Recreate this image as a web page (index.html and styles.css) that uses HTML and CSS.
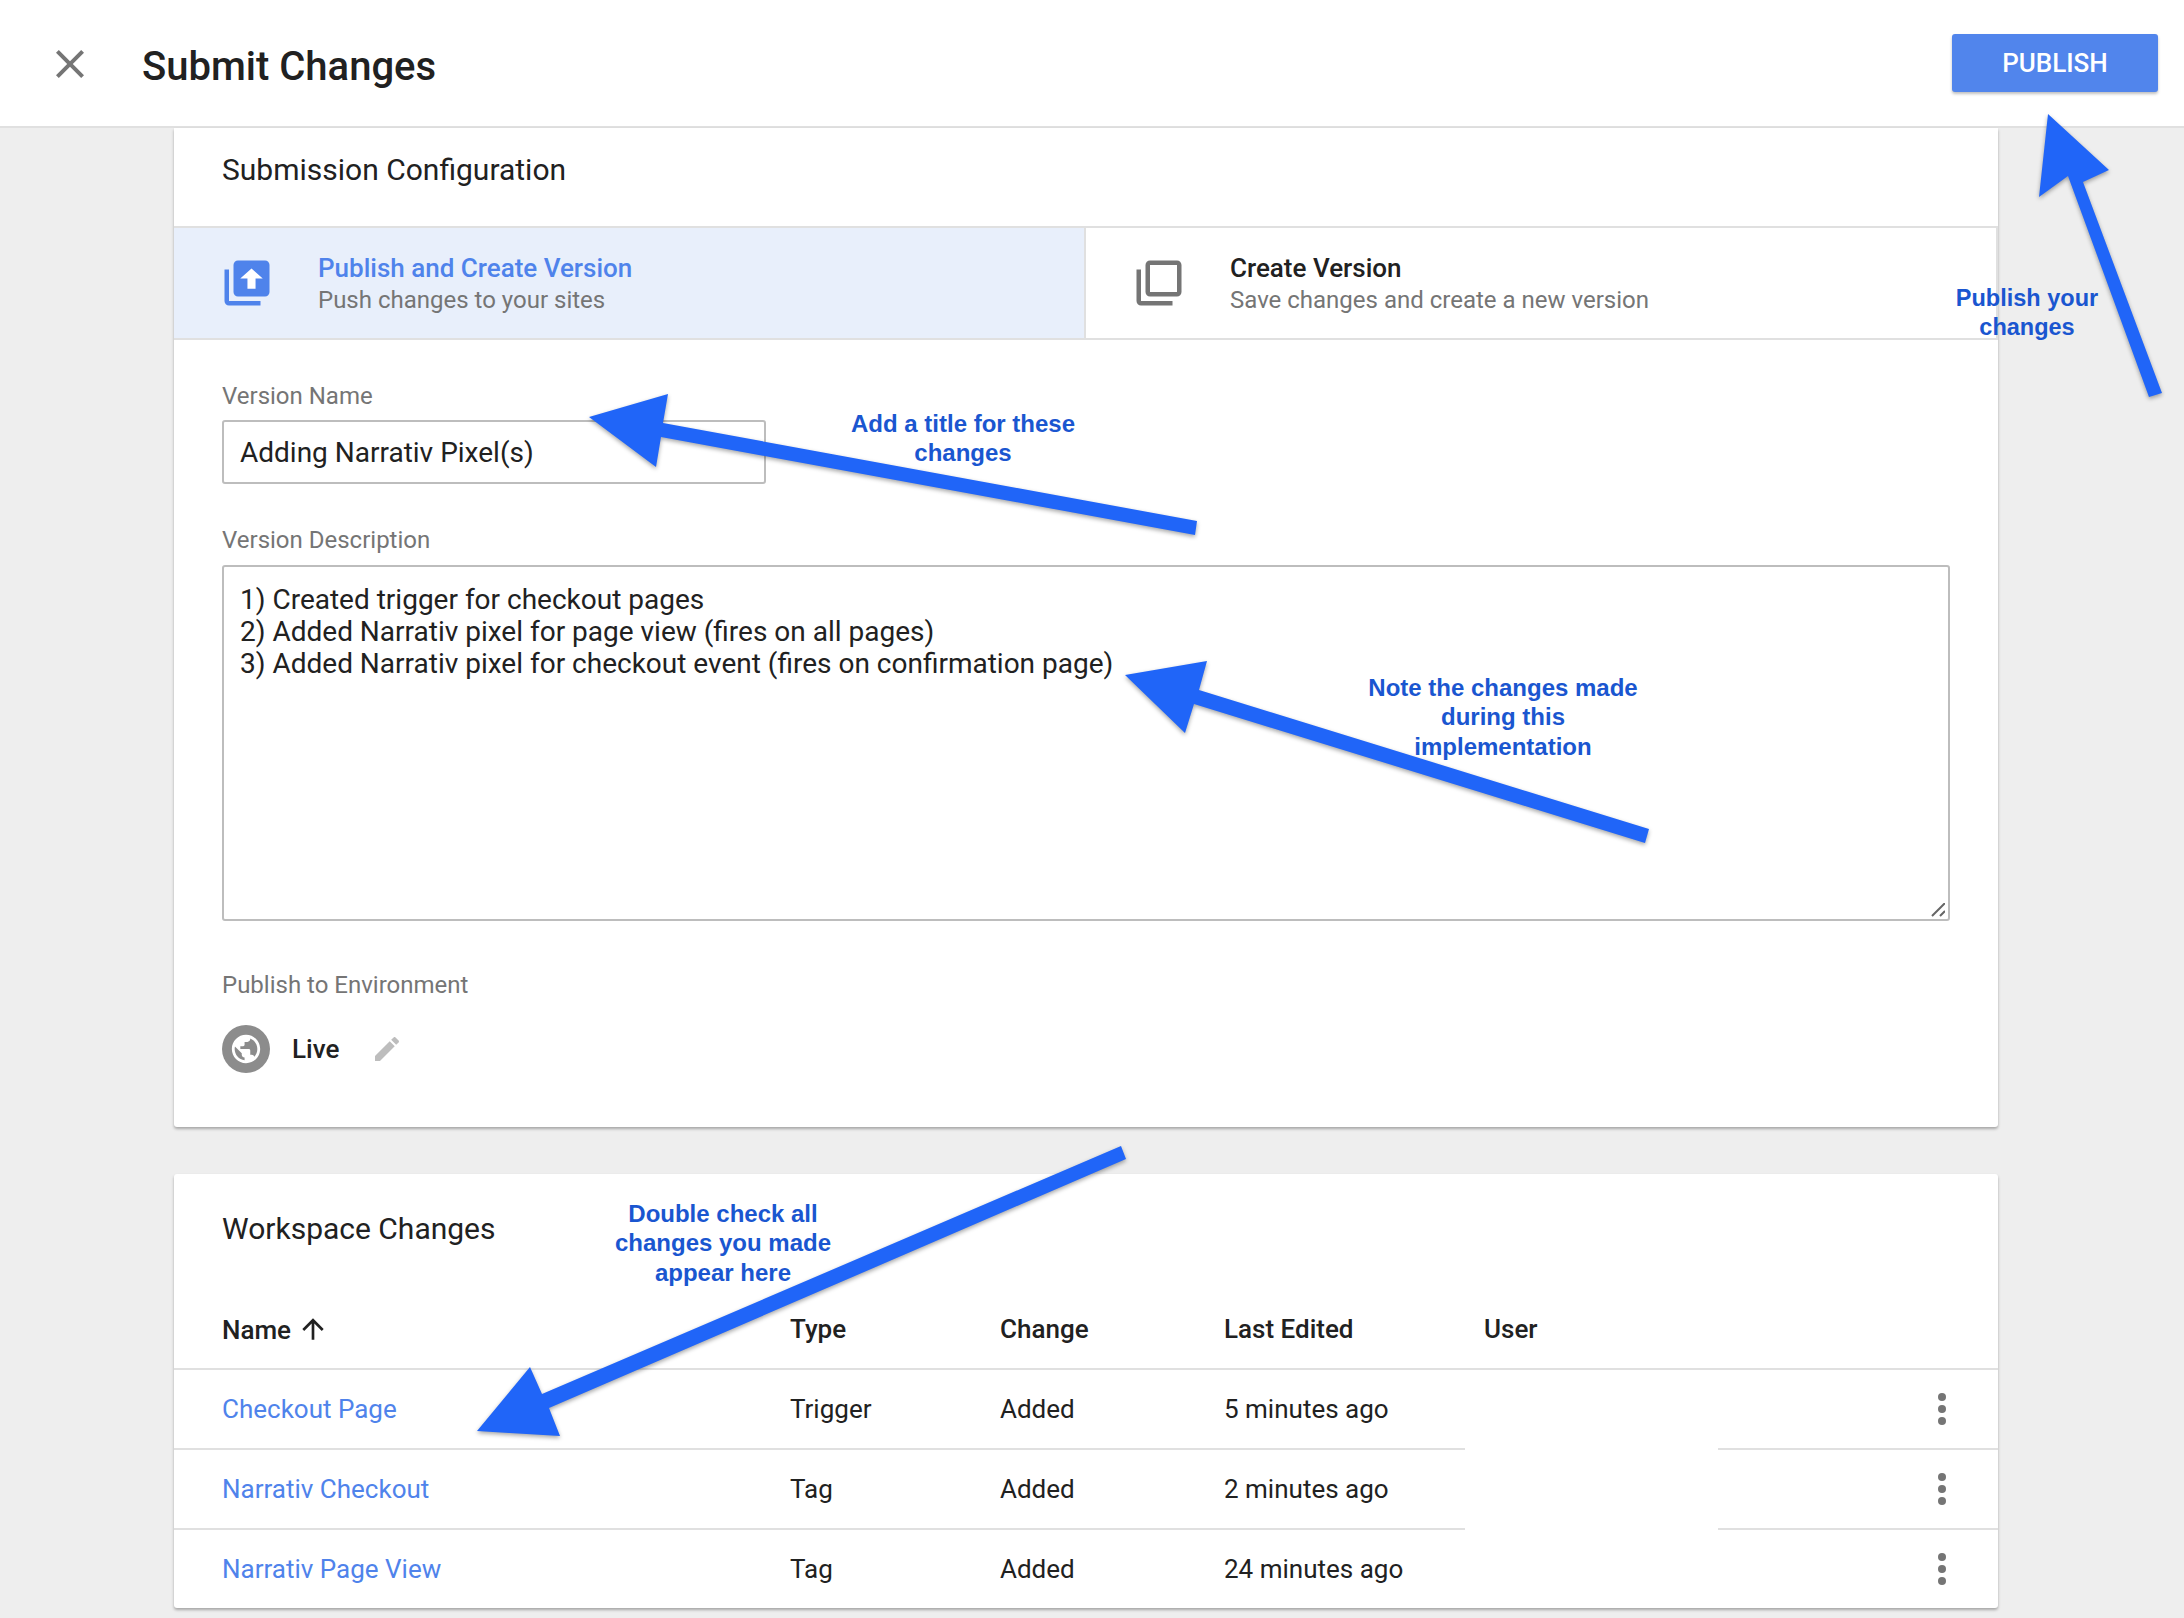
FILE: index.html
```html
<!DOCTYPE html>
<html lang="en">
<head>
  <meta charset="UTF-8" />
  <title>Submit Changes</title>
  <link rel="stylesheet" href="styles.css">
</head>
<body>

<header class="topbar">
  <svg class="close-icon" viewBox="0 0 24 24"><path d="M19 6.41L17.59 5 12 10.59 6.41 5 5 6.41 10.59 12 5 17.59 6.41 19 12 13.41 17.59 19 19 17.59 13.41 12z"/></svg>
  <h1>Submit Changes</h1>
  <button class="publish" type="button">PUBLISH</button>
</header>

<section class="card config">
  <h2>Submission Configuration</h2>
  <div class="tabs">
    <div class="tab active">
      <svg class="tab-icon" viewBox="0 0 24 24">
        <path d="M4 6H2v14c0 1.1.9 2 2 2h14v-2H4V6z"/>
        <path d="M20 2H8c-1.1 0-2 .9-2 2v12c0 1.1.9 2 2 2h12c1.1 0 2-.9 2-2V4c0-1.1-.9-2-2-2z"/>
        <path class="up" d="M14 5.5 9 10h3.2v4.5h3.6V10H19z"/>
      </svg>
      <div>
        <div class="tab-title">Publish and Create Version</div>
        <div class="tab-sub">Push changes to your sites</div>
      </div>
    </div>
    <div class="tab">
      <svg class="tab-icon" viewBox="0 0 24 24"><path d="M4 6H2v14c0 1.1.9 2 2 2h14v-2H4V6zm16-4H8c-1.1 0-2 .9-2 2v12c0 1.1.9 2 2 2h12c1.1 0 2-.9 2-2V4c0-1.1-.9-2-2-2zm0 14H8V4h12v12z"/></svg>
      <div>
        <div class="tab-title">Create Version</div>
        <div class="tab-sub">Save changes and create a new version</div>
      </div>
    </div>
  </div>

  <form class="form">
    <label for="version-name">Version Name</label>
    <input id="version-name" type="text" value="Adding Narrativ Pixel(s)">

    <label for="version-desc">Version Description</label>
    <div class="desc-wrap">
      <textarea id="version-desc">1) Created trigger for checkout pages
2) Added Narrativ pixel for page view (fires on all pages)
3) Added Narrativ pixel for checkout event (fires on confirmation page)</textarea>
      <svg class="grip" viewBox="0 0 14 14"><path d="M1 13 14 0M9 13l5-5"/></svg>
    </div>

    <label class="env-label">Publish to Environment</label>
    <div class="env">
      <span class="globe">
        <svg viewBox="0 0 24 24"><path d="M12 2C6.48 2 2 6.48 2 12s4.48 10 10 10 10-4.48 10-10S17.52 2 12 2zm-1 17.93c-3.95-.49-7-3.85-7-7.93 0-.62.08-1.21.21-1.79L9 15v1c0 1.1.9 2 2 2v1.93zm6.9-2.54c-.26-.81-1-1.39-1.9-1.39h-1v-3c0-.55-.45-1-1-1H8v-2h2c.55 0 1-.45 1-1V7h2c1.1 0 2-.9 2-2v-.41c2.93 1.19 5 4.06 5 7.41 0 2.08-.8 3.97-2.1 5.39z"/></svg>
      </span>
      <span class="env-name">Live</span>
      <svg class="pencil" viewBox="0 0 24 24"><path d="M3 17.25V21h3.75L17.81 9.94l-3.75-3.75L3 17.25zM20.71 7.04c.39-.39.39-1.02 0-1.41l-2.34-2.34c-.39-.39-1.02-.39-1.41 0l-1.83 1.83 3.75 3.75 1.83-1.83z"/></svg>
    </div>
  </form>
</section>

<section class="card changes">
  <h2>Workspace Changes</h2>
  <table>
    <colgroup>
      <col class="c-name"><col class="c-type"><col class="c-change"><col class="c-edited"><col class="c-user"><col class="c-menu">
    </colgroup>
    <thead>
      <tr>
        <th>Name <svg class="sort" viewBox="0 0 24 24"><path d="M4 12l1.41 1.41L11 7.83V20h2V7.83l5.58 5.59L20 12l-8-8-8 8z"/></svg></th>
        <th>Type</th>
        <th>Change</th>
        <th>Last Edited</th>
        <th class="user">User</th>
        <th></th>
      </tr>
    </thead>
    <tbody>
      <tr>
        <td><a href="#">Checkout Page</a></td>
        <td>Trigger</td>
        <td>Added</td>
        <td>5 minutes ago</td>
        <td class="user"></td>
        <td class="menu"><span class="dots"><i></i><i></i><i></i></span></td>
      </tr>
      <tr>
        <td><a href="#">Narrativ Checkout</a></td>
        <td>Tag</td>
        <td>Added</td>
        <td>2 minutes ago</td>
        <td class="user"></td>
        <td class="menu"><span class="dots"><i></i><i></i><i></i></span></td>
      </tr>
      <tr>
        <td><a href="#">Narrativ Page View</a></td>
        <td>Tag</td>
        <td>Added</td>
        <td>24 minutes ago</td>
        <td class="user"></td>
        <td class="menu"><span class="dots"><i></i><i></i><i></i></span></td>
      </tr>
    </tbody>
  </table>
</section>

<!-- annotations drawn on top of the screenshot -->
<svg class="arrows" viewBox="0 0 2184 1618">
  <polygon points="2048,114 2039,197 2068,176 2149,397 2162,393 2083,182 2109,170"/>
  <polygon points="589,417 668,394 663,423 1197,521 1195,535 661,437 656,467"/>
  <polygon points="1125,675 1207,661 1199,690 1649,829 1645,843 1194,704 1185,733"/>
  <polygon points="477,1431 530,1367 542,1394 1121,1146 1126,1159 549,1408 560,1436"/>
</svg>
<p class="note note-publish">Publish your<br>changes</p>
<p class="note note-title">Add a title for these<br>changes</p>
<p class="note note-desc">Note the changes made<br>during this<br>implementation</p>
<p class="note note-check">Double check all<br>changes you made<br>appear here</p>

</body>
</html>
```

FILE: styles.css
```css
body {
  margin: 0;
  height: 1618px;
  overflow: hidden;
  position: relative;
  background: #eeeeee;
  font-family: Roboto, sans-serif;
  color: #212121;
}

svg {
  display: block;
  fill: currentColor;
}

.topbar {
  display: flex;
  align-items: center;
  height: 126px;
  padding: 0 26px 0 46px;
  background: #fff;
  border-bottom: 2px solid #e0e0e0;
}

.close-icon {
  width: 48px;
  height: 48px;
  margin-top: 2px;
  color: #757575;
}

h1 {
  flex: 1;
  margin: 6px 0 0 48px;
  font-size: 40px;
  font-weight: 500;
}

.publish {
  width: 206px;
  height: 58px;
  background: #5185ec;
  color: #fff;
  border: none;
  border-radius: 3px;
  box-shadow: 0 2px 3px rgba(0,0,0,0.25);
  font-family: Roboto, sans-serif;
  font-size: 26px;
  font-weight: 500;
}

.card {
  width: 1824px;
  margin-left: 174px;
  background: #fff;
  border-radius: 0 0 3px 3px;
  box-shadow: 0 2px 3px rgba(0,0,0,0.3);
}

h2 {
  margin: 0;
  font-size: 30px;
  font-weight: 400;
}

.config h2 {
  padding: 24px 48px 0;
  height: 74px;
  line-height: 36px;
}

.tabs {
  display: flex;
  height: 110px;
  border-top: 2px solid #e0e0e0;
  border-bottom: 2px solid #e0e0e0;
}

.tab {
  flex: 1;
  display: flex;
  align-items: center;
  gap: 44px;
  box-sizing: border-box;
  padding-left: 46px;
  border-right: 2px solid #e0e0e0;
}

.tab.active {
  flex: 0 0 912px;
  background: #e8effb;
  color: #4f83eb;
}

.tab-icon {
  width: 54px;
  height: 54px;
  color: #757575;
}

.active .tab-icon {
  color: #4f83eb;
}

.up {
  fill: #fff;
}

.tab-title {
  margin-top: 2px;
  font-size: 26px;
  font-weight: 500;
  line-height: 32px;
}

.tab-sub {
  font-size: 24px;
  line-height: 32px;
  color: #757575;
}

.form {
  padding: 42px 48px 54px;
}

label {
  display: block;
  font-size: 24px;
  line-height: 28px;
  color: #757575;
}

input,
textarea {
  display: block;
  box-sizing: border-box;
  border: 2px solid #bdbdbd;
  border-radius: 3px;
  font-family: Roboto, sans-serif;
  font-size: 28px;
  color: #212121;
  outline: none;
}

input {
  width: 544px;
  height: 64px;
  margin: 10px 0 42px;
  padding: 0 16px;
}

.desc-wrap {
  position: relative;
  width: 1728px;
  margin: 11px 0 50px;
}

textarea {
  width: 1728px;
  height: 356px;
  padding: 17px 16px 15px;
  line-height: 32px;
  resize: none;
}

.grip {
  position: absolute;
  right: 5px;
  bottom: 4px;
  width: 14px;
  height: 14px;
  fill: none;
  stroke: #666;
  stroke-width: 2;
}

.env {
  display: flex;
  align-items: center;
  height: 48px;
  margin-top: 26px;
}

.globe {
  display: flex;
  align-items: center;
  justify-content: center;
  width: 48px;
  height: 48px;
  border-radius: 50%;
  background: #8c8c8c;
  color: #fff;
}

.globe svg {
  width: 34px;
  height: 34px;
}

.env-name {
  margin-left: 22px;
  font-size: 26px;
  font-weight: 500;
}

.pencil {
  width: 32px;
  height: 32px;
  margin-left: 32px;
  color: #bdbdbd;
}

.changes {
  margin-top: 47px;
  border-radius: 3px;
}

.changes h2 {
  padding: 37px 48px 0;
  height: 45px;
  line-height: 36px;
}

table {
  width: 100%;
  table-layout: fixed;
  border-collapse: separate;
  border-spacing: 0;
}

.c-name { width: 616px; }
.c-type { width: 210px; }
.c-change { width: 224px; }
.c-edited { width: 241px; }
.c-user { width: 253px; }

th, td {
  padding: 0;
  text-align: left;
  font-size: 26px;
}

th {
  height: 114px;
  padding-top: 33px;
  box-sizing: border-box;
  font-weight: 500;
  border-bottom: 2px solid #e0e0e0;
}

th:first-child,
td:first-child {
  padding-left: 48px;
}

th .sort {
  display: inline-block;
  width: 32px;
  height: 32px;
  margin-left: -1px;
  vertical-align: -6px;
}

td {
  height: 78px;
  border-bottom: 2px solid #e0e0e0;
}

tbody tr:last-child td {
  border-bottom: none;
}

td.user {
  border-bottom: none;
}

th.user {
  padding-left: 19px;
}

a {
  color: #4f83eb;
  text-decoration: none;
}

.menu {
  padding-left: 220px;
}

.dots {
  display: flex;
  flex-direction: column;
  gap: 4px;
  width: 8px;
}

.dots i {
  width: 8px;
  height: 8px;
  border-radius: 50%;
  background: #757575;
}

.arrows {
  position: absolute;
  left: 0;
  top: 0;
  width: 2184px;
  height: 1618px;
  fill: #2065f8;
  filter: drop-shadow(0 2px 2px rgba(0,0,0,0.35));
  pointer-events: none;
}

.note {
  position: absolute;
  margin: 0;
  width: 400px;
  text-align: center;
  font-family: "Liberation Sans", Arial, sans-serif;
  font-size: 24px;
  font-weight: 700;
  line-height: 29.3px;
  color: #1a56d0;
}

.note-publish { left: 1827px; top: 284px; font-size: 23.5px; }
.note-title { left: 763px; top: 409px; }
.note-desc { left: 1303px; top: 673px; }
.note-check { left: 523px; top: 1199px; }
```
